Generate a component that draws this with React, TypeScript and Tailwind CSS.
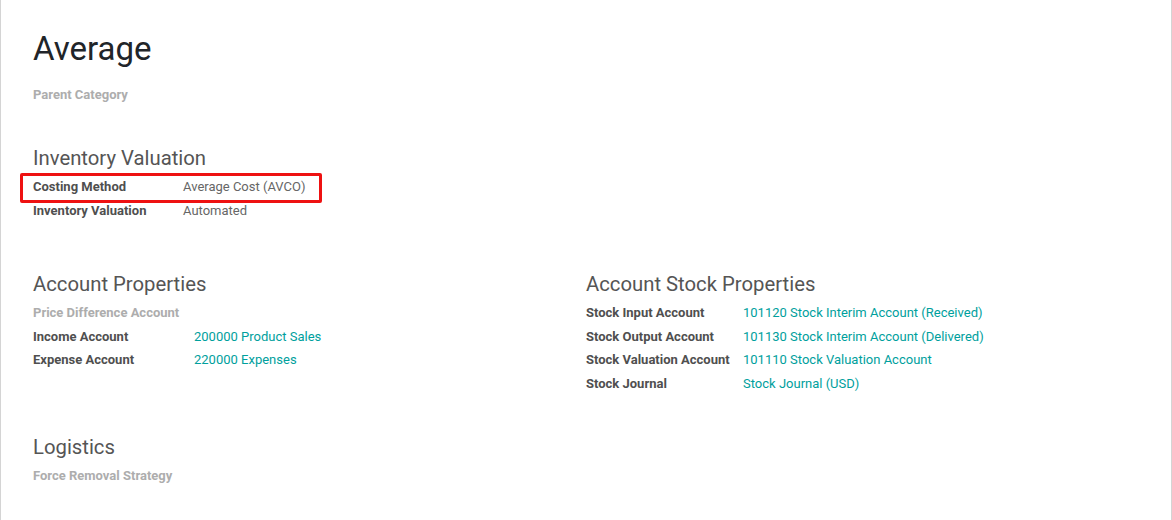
export default function App() {
  const font = { fontFamily: "Roboto, 'Noto Sans', sans-serif" };
  return (
    <div className="h-[520px] w-[1172px] border-x border-[#d4d4d4] bg-white px-[32px] text-[13px]" style={font}>
      <h1 className="pt-[31px] text-[33px] leading-[36px] text-[#212529]">Average</h1>
      <div className="mt-[18px] text-[13px] font-bold leading-[20px] text-[#adadad]">Parent Category</div>

      <h2 className="mt-[41px] text-[20.3px] leading-[24px] text-[#555555]">Inventory Valuation</h2>
      <div className="mt-[5px]">
        <div className="relative flex leading-[24px]">
          <span className="w-[150px] font-bold text-[#4f4f4f]">Costing Method</span>
          <span className="text-[#666666]">Average Cost (AVCO)</span>
          <div className="absolute left-[-13px] top-[-2px] h-[30px] w-[302px] rounded-[2px] border-[3px] border-[#ee1111]" />
        </div>
        <div className="flex leading-[24px]">
          <span className="w-[150px] font-bold text-[#4f4f4f]">Inventory Valuation</span>
          <span className="text-[#666666]">Automated</span>
        </div>
      </div>

      <div className="mt-[49px] grid grid-cols-2">
        <div>
          <h2 className="text-[20.3px] leading-[24px] text-[#555555]">Account Properties</h2>
          <div className="mt-[5px]">
            <div className="font-bold leading-[23.5px] text-[#adadad]">Price Difference Account</div>
            <div className="flex leading-[23.5px]">
              <span className="w-[161px] font-bold text-[#4f4f4f]">Income Account</span>
              <span className="text-[#00a09d]">200000 Product Sales</span>
            </div>
            <div className="flex leading-[23.5px]">
              <span className="w-[161px] font-bold text-[#4f4f4f]">Expense Account</span>
              <span className="text-[#00a09d]">220000 Expenses</span>
            </div>
          </div>
        </div>
        <div>
          <h2 className="text-[20.3px] leading-[24px] text-[#555555]">Account Stock Properties</h2>
          <div className="mt-[5px]">
            {[
              ["Stock Input Account", "101120 Stock Interim Account (Received)"],
              ["Stock Output Account", "101130 Stock Interim Account (Delivered)"],
              ["Stock Valuation Account", "101110 Stock Valuation Account"],
              ["Stock Journal", "Stock Journal (USD)"],
            ].map(([label, value]) => (
              <div key={label} className="flex leading-[23.7px]">
                <span className="w-[157px] font-bold text-[#4f4f4f]">{label}</span>
                <span className="text-[#00a09d]">{value}</span>
              </div>
            ))}
          </div>
        </div>
      </div>

      <h2 className="mt-[39px] text-[20.3px] leading-[24px] text-[#555555]">Logistics</h2>
      <div className="mt-[5px] font-bold leading-[24px] text-[#adadad]">Force Removal Strategy</div>
    </div>
  );
}
